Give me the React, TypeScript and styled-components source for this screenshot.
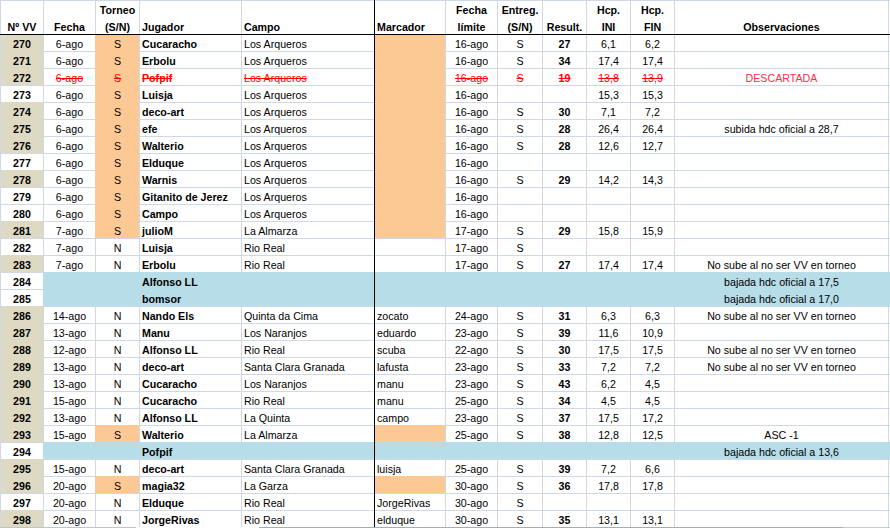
import React from "react";
import styled, { createGlobalStyle, css } from "styled-components";

const GRID = "#d0d7e5";
const ORANGE = "#fcc995";
const BLUE = "#b6dde8";
const TAN = "#ddd9c3";
const RED = "#ff0000";

const Global = createGlobalStyle`
  html, body { margin: 0; padding: 0; background: #fff; }
  body { width: 890px; height: 528px; overflow: hidden; font-family: "Liberation Sans", Arial, sans-serif; }
`;

const Sheet = styled.div`
  width: 890px;
  height: 528px;
  overflow: hidden;
  background: #fff;
`;

const Table = styled.table`
  table-layout: fixed;
  width: 890px;
  border-collapse: separate;
  border-spacing: 0;
  font-size: 10.67px;
  color: #000;
`;

const Col = styled.col<{ $w: number }>`
  width: ${(p) => p.$w}px;
`;

/* Grid lines are inset shadows, so a black rule crossing a grey line stays unbroken. */
const HeadCell = styled.th<{ $left?: boolean; $rule?: boolean }>`
  box-sizing: border-box;
  height: 35px;
  padding: 0 2px 0 3px;
  vertical-align: bottom;
  text-align: ${(p) => (p.$left ? "left" : "center")};
  font-weight: 700;
  line-height: 17px;
  white-space: nowrap;
  overflow: hidden;
  box-shadow: inset 0 -1px 0 #000, inset 1px 0 0 ${(p) => (p.$rule ? "#000" : GRID)}, inset 0 1px 0 ${GRID};
`;

const HeadText = styled.div`
  margin-bottom: -1px;
`;

const Cell = styled.td<{
  $fill?: string;
  $first?: boolean;
  $top?: boolean;
  $align?: string;
  $bold?: boolean;
  $rule?: boolean;
  $struck?: boolean;
  $alert?: boolean;
}>`
  box-sizing: border-box;
  height: ${(p) => (p.$top ? 16 : 17)}px;
  padding: ${(p) => (p.$top ? 2 : 3)}px 2px 0 3px;
  line-height: 14px;
  white-space: nowrap;
  overflow: hidden;
  text-align: ${(p) => p.$align ?? "center"};
  font-weight: ${(p) => (p.$bold ? 700 : 400)};
  background: ${(p) => p.$fill ?? "#fff"};
  box-shadow: inset 1px 0 0 ${(p) => (p.$rule ? "#000" : p.$first ? GRID : p.$fill ?? GRID)},
    inset 0 ${(p) => (p.$top ? 0 : 1)}px 0 ${(p) => p.$fill ?? GRID};
  ${(p) =>
    p.$struck &&
    css`
      color: ${RED};
      text-decoration: line-through;
    `}
  ${(p) =>
    p.$alert &&
    css`
      color: #ff2a4d;
    `}
`;

const BottomEdge = styled.div`
  display: flex;
  height: 1px;
`;

const EdgePiece = styled.div<{ $w: number; $c: string }>`
  width: ${(p) => p.$w}px;
  background: ${(p) => p.$c};
`;

type Row = {
  n: number;
  tan?: boolean;
  band?: boolean;
  fecha?: string;
  torneo?: string;
  jugador: string;
  campo?: string;
  marcador?: string;
  limite?: string;
  entreg?: string;
  res?: string;
  ini?: string;
  fin?: string;
  obs?: string;
  orange?: boolean;
  struck?: boolean;
};

const NOSUBE = "No sube al no ser VV en torneo";
const LA = "Los Arqueros";

const rows: Row[] = [
  { n: 270, tan: true, fecha: "6-ago", torneo: "S", jugador: "Cucaracho", campo: LA, orange: true, limite: "16-ago", entreg: "S", res: "27", ini: "6,1", fin: "6,2" },
  { n: 271, tan: true, fecha: "6-ago", torneo: "S", jugador: "Erbolu", campo: LA, orange: true, limite: "16-ago", entreg: "S", res: "34", ini: "17,4", fin: "17,4" },
  { n: 272, tan: true, struck: true, fecha: "6-ago", torneo: "S", jugador: "Pofpif", campo: LA, orange: true, limite: "16-ago", entreg: "S", res: "19", ini: "13,8", fin: "13,9", obs: "DESCARTADA" },
  { n: 273, fecha: "6-ago", torneo: "S", jugador: "Luisja", campo: LA, orange: true, limite: "16-ago", ini: "15,3", fin: "15,3" },
  { n: 274, tan: true, fecha: "6-ago", torneo: "S", jugador: "deco-art", campo: LA, orange: true, limite: "16-ago", entreg: "S", res: "30", ini: "7,1", fin: "7,2" },
  { n: 275, tan: true, fecha: "6-ago", torneo: "S", jugador: "efe", campo: LA, orange: true, limite: "16-ago", entreg: "S", res: "28", ini: "26,4", fin: "26,4", obs: "subida hdc oficial a 28,7" },
  { n: 276, tan: true, fecha: "6-ago", torneo: "S", jugador: "Walterio", campo: LA, orange: true, limite: "16-ago", entreg: "S", res: "28", ini: "12,6", fin: "12,7" },
  { n: 277, fecha: "6-ago", torneo: "S", jugador: "Elduque", campo: LA, orange: true, limite: "16-ago" },
  { n: 278, tan: true, fecha: "6-ago", torneo: "S", jugador: "Warnis", campo: LA, orange: true, limite: "16-ago", entreg: "S", res: "29", ini: "14,2", fin: "14,3" },
  { n: 279, fecha: "6-ago", torneo: "S", jugador: "Gitanito de Jerez", campo: LA, orange: true, limite: "16-ago" },
  { n: 280, fecha: "6-ago", torneo: "S", jugador: "Campo", campo: LA, orange: true, limite: "16-ago" },
  { n: 281, tan: true, fecha: "7-ago", torneo: "S", jugador: "julioM", campo: "La Almarza", orange: true, limite: "17-ago", entreg: "S", res: "29", ini: "15,8", fin: "15,9" },
  { n: 282, fecha: "7-ago", torneo: "N", jugador: "Luisja", campo: "Rio Real", limite: "17-ago", entreg: "S" },
  { n: 283, tan: true, fecha: "7-ago", torneo: "N", jugador: "Erbolu", campo: "Rio Real", limite: "17-ago", entreg: "S", res: "27", ini: "17,4", fin: "17,4", obs: NOSUBE },
  { n: 284, band: true, jugador: "Alfonso LL", obs: "bajada hdc oficial a 17,5" },
  { n: 285, band: true, jugador: "bomsor", obs: "bajada hdc oficial a 17,0" },
  { n: 286, tan: true, fecha: "14-ago", torneo: "N", jugador: "Nando Els", campo: "Quinta da Cima", marcador: "zocato", limite: "24-ago", entreg: "S", res: "31", ini: "6,3", fin: "6,3", obs: NOSUBE },
  { n: 287, tan: true, fecha: "13-ago", torneo: "N", jugador: "Manu", campo: "Los Naranjos", marcador: "eduardo", limite: "23-ago", entreg: "S", res: "39", ini: "11,6", fin: "10,9" },
  { n: 288, tan: true, fecha: "12-ago", torneo: "N", jugador: "Alfonso LL", campo: "Rio Real", marcador: "scuba", limite: "22-ago", entreg: "S", res: "30", ini: "17,5", fin: "17,5", obs: NOSUBE },
  { n: 289, tan: true, fecha: "13-ago", torneo: "N", jugador: "deco-art", campo: "Santa Clara Granada", marcador: "lafusta", limite: "23-ago", entreg: "S", res: "33", ini: "7,2", fin: "7,2", obs: NOSUBE },
  { n: 290, tan: true, fecha: "13-ago", torneo: "N", jugador: "Cucaracho", campo: "Los Naranjos", marcador: "manu", limite: "23-ago", entreg: "S", res: "43", ini: "6,2", fin: "4,5" },
  { n: 291, tan: true, fecha: "15-ago", torneo: "N", jugador: "Cucaracho", campo: "Rio Real", marcador: "manu", limite: "25-ago", entreg: "S", res: "34", ini: "4,5", fin: "4,5" },
  { n: 292, tan: true, fecha: "13-ago", torneo: "N", jugador: "Alfonso LL", campo: "La Quinta", marcador: "campo", limite: "23-ago", entreg: "S", res: "37", ini: "17,5", fin: "17,2" },
  { n: 293, tan: true, fecha: "15-ago", torneo: "S", jugador: "Walterio", campo: "La Almarza", orange: true, limite: "25-ago", entreg: "S", res: "38", ini: "12,8", fin: "12,5", obs: "ASC -1" },
  { n: 294, band: true, jugador: "Pofpif", obs: "bajada hdc oficial a 13,6" },
  { n: 295, tan: true, fecha: "15-ago", torneo: "N", jugador: "deco-art", campo: "Santa Clara Granada", marcador: "luisja", limite: "25-ago", entreg: "S", res: "39", ini: "7,2", fin: "6,6" },
  { n: 296, tan: true, fecha: "20-ago", torneo: "S", jugador: "magia32", campo: "La Garza", orange: true, limite: "30-ago", entreg: "S", res: "36", ini: "17,8", fin: "17,8" },
  { n: 297, fecha: "20-ago", torneo: "N", jugador: "Elduque", campo: "Rio Real", marcador: "JorgeRivas", limite: "30-ago", entreg: "S" },
  { n: 298, tan: true, fecha: "20-ago", torneo: "N", jugador: "JorgeRivas", campo: "Rio Real", marcador: "elduque", limite: "30-ago", entreg: "S", res: "35", ini: "13,1", fin: "13,1" },
];

const widths = [43, 52, 44, 102, 133, 71, 52, 45, 44, 44, 44, 214, 2];

const edge: [number, string][] = [
  [136, "#bcc5d3"],
  [123, "#ffffff"],
  [584, "#a4adbb"],
  [47, "#c3cbd8"],
];

export default function App() {
  return (
    <Sheet>
      <Global />
      <Table>
        <colgroup>
          {widths.map((w, i) => (
            <Col key={i} $w={w} />
          ))}
        </colgroup>
        <thead>
          <tr>
            <HeadCell><HeadText>Nº VV</HeadText></HeadCell>
            <HeadCell><HeadText>Fecha</HeadText></HeadCell>
            <HeadCell>
              <HeadText>
                Torneo
                <br />
                (S/N)
              </HeadText>
            </HeadCell>
            <HeadCell $left><HeadText>Jugador</HeadText></HeadCell>
            <HeadCell $left><HeadText>Campo</HeadText></HeadCell>
            <HeadCell $left $rule><HeadText>Marcador</HeadText></HeadCell>
            <HeadCell>
              <HeadText>
                Fecha
                <br />
                límite
              </HeadText>
            </HeadCell>
            <HeadCell>
              <HeadText>
                Entreg.
                <br />
                (S/N)
              </HeadText>
            </HeadCell>
            <HeadCell><HeadText>Result.</HeadText></HeadCell>
            <HeadCell>
              <HeadText>
                Hcp.
                <br />
                INI
              </HeadText>
            </HeadCell>
            <HeadCell>
              <HeadText>
                Hcp.
                <br />
                FIN
              </HeadText>
            </HeadCell>
            <HeadCell><HeadText>Observaciones</HeadText></HeadCell>
            <HeadCell />
          </tr>
        </thead>
        <tbody>
          {rows.map((r, i) => {
            const top = i === 0;
            const band = r.band ? BLUE : undefined;
            const s = r.struck;
            return (
              <tr key={r.n}>
                <Cell $first $bold $top={top} $fill={r.tan ? TAN : undefined}>
                  {r.n}
                </Cell>
                <Cell $top={top} $fill={band} $struck={s}>
                  {r.fecha}
                </Cell>
                <Cell $top={top} $fill={band ?? (r.torneo === "S" ? ORANGE : undefined)} $struck={s}>
                  {r.torneo}
                </Cell>
                <Cell $top={top} $fill={band} $align="left" $bold $struck={s}>
                  {r.jugador}
                </Cell>
                <Cell $top={top} $fill={band} $align="left" $struck={s}>
                  {r.campo}
                </Cell>
                <Cell $top={top} $rule $fill={band ?? (r.orange ? ORANGE : undefined)} $align="left">
                  {r.marcador}
                </Cell>
                <Cell $top={top} $fill={band} $struck={s}>
                  {r.limite}
                </Cell>
                <Cell $top={top} $fill={band} $struck={s}>
                  {r.entreg}
                </Cell>
                <Cell $top={top} $fill={band} $bold $struck={s}>
                  {r.res}
                </Cell>
                <Cell $top={top} $fill={band} $struck={s}>
                  {r.ini}
                </Cell>
                <Cell $top={top} $fill={band} $struck={s}>
                  {r.fin}
                </Cell>
                <Cell $top={top} $fill={band} $alert={s}>
                  {r.obs}
                </Cell>
                <Cell $top={top} $fill={band} />
              </tr>
            );
          })}
        </tbody>
      </Table>
      <BottomEdge>
        {edge.map(([w, c], i) => (
          <EdgePiece key={i} $w={w} $c={c} />
        ))}
      </BottomEdge>
    </Sheet>
  );
}
